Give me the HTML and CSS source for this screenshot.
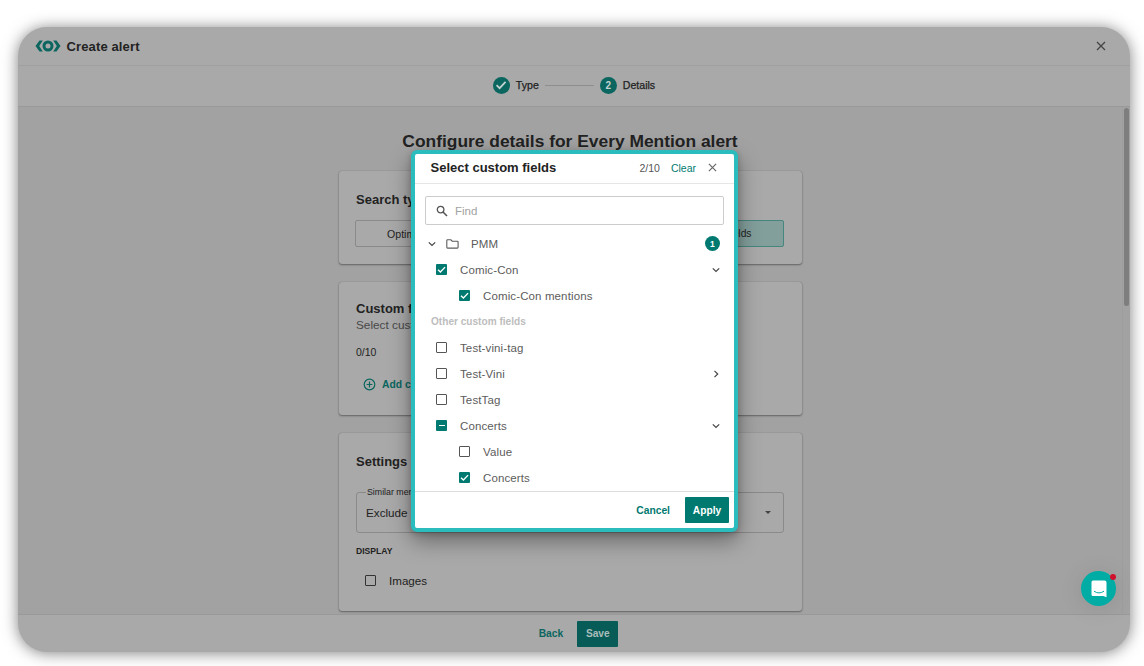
FILE: index.html
```html
<!DOCTYPE html>
<html lang="en">
<head>
  <meta charset="UTF-8" />
  <meta name="viewport" content="width=device-width, initial-scale=1.0"/>
  <title>Create alert</title>
  <link rel="stylesheet" href="styles.css">
</head>
<body>
  <svg class="sprite" width="0" height="0">
    <symbol id="check" viewBox="0 0 12 12"><path d="M2.2 6.2 4.8 8.7 9.9 3.4" fill="none" stroke="currentColor" stroke-width="1.5"/></symbol>
    <symbol id="down" viewBox="0 0 8 8"><path d="M.8 2.3 4 5.500 7.200 2.300" fill="none" stroke="currentColor" stroke-width="1.2"/></symbol>
    <symbol id="right" viewBox="0 0 8 8"><path d="M2.500 .8 5.700 4 2.500 7.200" fill="none" stroke="currentColor" stroke-width="1.2"/></symbol>
    <symbol id="close" viewBox="0 0 10 10"><path d="M1 1 9 9M9 1 1 9" fill="none" stroke="currentColor" stroke-width="1.3"/></symbol>
  </svg>

  <div class="window">
    <header class="header">
      <svg class="logo" viewBox="0 0 25 12">
        <path d="M0 6 4 .5h3.300L3.700 6l3.600 5.500H4zM25 6 21 .5h-3.300L21.300 6l-3.600 5.500H21z" fill="currentColor"/>
        <circle cx="12.5" cy="6" r="4" fill="none" stroke="currentColor" stroke-width="3"/>
      </svg>
      <h1>Create alert</h1>
      <svg class="header-close"><use href="#close"/></svg>
    </header>

    <div class="stepper">
      <span class="step-icon"><svg width="14" height="14"><use href="#check"/></svg></span>
      <span class="step-label">Type</span>
      <span class="step-line"></span>
      <span class="step-icon">2</span>
      <span class="step-label">Details</span>
    </div>

    <main class="content">
      <h2 class="page-title">Configure details for Every Mention alert</h2>

      <section class="card search-card">
        <h3>Search type</h3>
        <div class="segments">
          <button class="segment first">Optimized</button>
          <button class="segment"></button>
          <button class="segment last active">Custom fields</button>
        </div>
      </section>

      <section class="card fields-card">
        <h3>Custom fields</h3>
        <p class="hint">Select custom</p>
        <p class="count">0/10</p>
        <button class="add-btn">
          <svg width="13" height="13" viewBox="0 0 13 13"><g fill="none" stroke="currentColor" stroke-width="1.2"><circle cx="6.5" cy="6.5" r="5.3"/><path d="M6.5 3.6v5.8M3.6 6.5h5.8"/></g></svg>
          Add custom field
        </button>
      </section>

      <section class="card settings-card">
        <h3>Settings</h3>
        <fieldset class="select">
          <legend>Similar mentions</legend>
          <span>Exclude</span>
          <svg width="6" height="3" viewBox="0 0 6 3"><path d="M0 0h6L3 3z" fill="currentColor"/></svg>
        </fieldset>
        <h4>DISPLAY</h4>
        <label class="display-row"><span class="box"></span>Images</label>
      </section>

      <div class="scroll-track"><div class="scroll-thumb"></div></div>
    </main>

    <footer class="footer">
      <button class="link-btn">Back</button>
      <button class="save-btn">Save</button>
    </footer>

    <div class="modal">
      <div class="modal-header">
        <h3>Select custom fields</h3>
        <span class="modal-count">2/10</span>
        <a class="clear">Clear</a>
        <svg class="modal-close"><use href="#close"/></svg>
      </div>
      <div class="modal-body">
        <div class="search">
          <svg width="12" height="12" viewBox="0 0 12 12"><g fill="none" stroke="currentColor" stroke-width="1.3"><circle cx="4.6" cy="4.6" r="3.3"/><path d="M7 7 11 11" stroke-width="1.6"/></g></svg>
          <span>Find</span>
        </div>
        <div class="row folder">
          <svg class="arrow"><use href="#down"/></svg>
          <svg class="folder-icon" viewBox="0 0 13 10"><path d="M1.6.8h3.3l1.3 1.4h5.1q.8 0 .8.8v5.2q0 .9-.8.9H1.6q-.8 0-.8-.9V1.6q0-.8.8-.8z" fill="none" stroke="currentColor" stroke-width="1.1"/></svg>
          <span class="label">PMM</span>
          <span class="badge">1</span>
        </div>
        <div class="row">
          <span class="box checked"><svg><use href="#check"/></svg></span>
          <span class="label">Comic-Con</span>
          <svg class="arrow"><use href="#down"/></svg>
        </div>
        <div class="row child">
          <span class="box checked"><svg><use href="#check"/></svg></span>
          <span class="label">Comic-Con mentions</span>
        </div>
        <div class="row group">Other custom fields</div>
        <div class="row">
          <span class="box"></span>
          <span class="label">Test-vini-tag</span>
        </div>
        <div class="row">
          <span class="box"></span>
          <span class="label">Test-Vini</span>
          <svg class="arrow"><use href="#right"/></svg>
        </div>
        <div class="row">
          <span class="box"></span>
          <span class="label">TestTag</span>
        </div>
        <div class="row">
          <span class="box checked"><span class="dash"></span></span>
          <span class="label">Concerts</span>
          <svg class="arrow"><use href="#down"/></svg>
        </div>
        <div class="row child">
          <span class="box"></span>
          <span class="label">Value</span>
        </div>
        <div class="row child">
          <span class="box checked"><svg><use href="#check"/></svg></span>
          <span class="label">Concerts</span>
        </div>
      </div>
      <div class="modal-footer">
        <button class="link-btn">Cancel</button>
        <button class="apply-btn">Apply</button>
      </div>
    </div>

    <div class="chat">
      <svg width="16" height="18" viewBox="0 0 16 18"><path d="M2 .5h11.500q2 0 2 2V17.300l-3.200-1.300H2q-1.500 0-1.500-1.500V2Q.5.500 2 .500z" fill="#fff"/><path d="M3 11.200q5 3.400 10 0" fill="none" stroke="#00aca4" stroke-width="1"/></svg>
      <span class="chat-dot"></span>
    </div>
  </div>
</body>
</html>
```

FILE: styles.css
```css
* {
  box-sizing: border-box;
}

body {
  margin: 0;
  height: 666px;
  padding: 27px 14px 14px 18px;
  overflow: hidden;
  background: #fff;
  color: #222;
  font-family: "Liberation Sans", Arial, sans-serif;
}

h1, h2, h3, h4, p {
  margin: 0;
}

button {
  padding: 0;
  border: none;
  background: none;
  color: inherit;
  font-family: inherit;
}

.sprite {
  position: absolute;
}

.window {
  position: relative;
  display: flex;
  flex-direction: column;
  width: 1112px;
  height: 625px;
  border-radius: 29px;
  background: #a9a9a9;
  box-shadow: 0 1px 15px rgba(0, 0, 0, 0.5);
}

.header {
  display: flex;
  align-items: center;
  height: 39px;
  padding: 0 24px 0 17px;
  border-bottom: 1px solid #a0a0a0;
}

.logo {
  width: 26px;
  height: 12px;
  margin-right: 5.5px;
  color: #0b6660;
}

h1 {
  font-size: 13px;
  letter-spacing: 0.13px;
}

.header-close {
  width: 10px;
  height: 10px;
  margin-left: auto;
  color: #444;
}

.stepper {
  display: flex;
  align-items: center;
  justify-content: center;
  height: 41px;
  padding-bottom: 2px;
  border-bottom: 1px solid #999;
}

.step-icon {
  display: flex;
  align-items: center;
  justify-content: center;
  width: 17px;
  height: 17px;
  border-radius: 50%;
  background: #0b6660;
  color: #c4d2d0;
  font-size: 10px;
  font-weight: 700;
}

.step-label {
  margin-left: 6px;
  font-size: 10.6px;
  -webkit-text-stroke: 0.25px #222;
}

.step-line {
  width: 49px;
  height: 1px;
  margin: 0 6px;
  background: #8e8e8e;
}

.content {
  position: relative;
  display: flex;
  flex-direction: column;
  align-items: center;
  height: 507px;
  padding-right: 8px;
  background: #a2a2a2;
}

.page-title {
  height: 64px;
  padding-top: 24px;
  font-size: 17.4px;
  line-height: 20px;
  white-space: nowrap;
}

.card {
  flex: none;
  width: 463px;
  margin-bottom: 18px;
  padding: 0 18px 0 17.5px;
  border-radius: 3px;
  background: #a9a9a9;
  box-shadow: 0 1px 2px rgba(0, 0, 0, 0.38), 0 0 1px rgba(0, 0, 0, 0.3);
}

.card h3,
.modal h3 {
  font-size: 13px;
  line-height: 16px;
}

.search-card {
  height: 93px;
  padding-top: 21px;
}

.segments {
  display: flex;
  height: 27px;
  margin: 12px 0 0 -1px;
}

.segment {
  display: flex;
  align-items: center;
  flex: 1;
  border: 1px solid #8a8a8a;
  font-size: 10.6px;
}

.segment.first {
  padding-left: 31px;
  border-radius: 2px 0 0 2px;
}

.segment.last {
  justify-content: flex-end;
  padding-right: 31px;
  border-radius: 0 2px 2px 0;
  font-size: 10.3px;
}

.segment.active {
  border-color: #47857f;
  background: #839f9b;
}

.fields-card {
  height: 133px;
  padding-top: 19px;
}

.hint {
  color: #484848;
  font-size: 11.8px;
  line-height: 17px;
}

.count {
  margin-top: 12px;
  font-size: 10.5px;
  line-height: 13px;
}

.add-btn {
  display: flex;
  align-items: center;
  gap: 6px;
  margin: 18.5px 0 0 7px;
  color: #0b6660;
  font-size: 10.3px;
  font-weight: 700;
}

.settings-card {
  height: 178px;
  margin-bottom: 0;
  padding-top: 21px;
}

.select {
  display: flex;
  align-items: center;
  justify-content: space-between;
  height: 46px;
  margin: 17px 0 0;
  padding: 0 12px 6px 9px;
  border: 1px solid #8a8a8a;
  border-radius: 3px;
  font-size: 11.7px;
}

.select legend {
  padding: 0 3px 0 1px;
  font-size: 8.8px;
  line-height: 11px;
}

.select svg {
  margin-top: 1px;
  color: #444;
}

h4 {
  margin-top: 12px;
  font-size: 8.6px;
  line-height: 12px;
}

.display-row {
  display: flex;
  align-items: center;
  gap: 13px;
  margin: 17px 0 0 9px;
  font-size: 11.6px;
}

.box {
  display: flex;
  align-items: center;
  justify-content: center;
  flex: none;
  width: 11px;
  height: 11px;
  border: 1.5px solid #555;
  border-radius: 1px;
}

.display-row .box {
  border: 1px solid #333;
}

.scroll-track {
  position: absolute;
  top: 0;
  right: 0;
  width: 8px;
  height: 100%;
  border-left: 1px solid #9e9e9e;
}

.scroll-thumb {
  width: 5px;
  height: 198px;
  margin: 1px 0 0 1px;
  border-radius: 3px;
  background: #7e7e7e;
}

.footer {
  display: flex;
  align-items: center;
  justify-content: center;
  gap: 14px;
  height: 38px;
  padding-left: 9px;
  border-top: 1px solid #999;
}

.link-btn {
  color: #0b6660;
  font-size: 10.3px;
  font-weight: 700;
}

.save-btn,
.apply-btn {
  height: 26px;
  border-radius: 1px;
  font-size: 10.2px;
  font-weight: 700;
}

.save-btn {
  width: 41px;
  background: #075c57;
  color: #a9bdbb;
}

/* custom fields dialog */
.modal {
  position: absolute;
  top: 123px;
  left: 393px;
  display: flex;
  flex-direction: column;
  width: 327px;
  height: 382px;
  border: 4px solid #2bbcbd;
  border-radius: 6px;
  background: #fff;
  box-shadow: 0 9px 22px rgba(0, 0, 0, 0.38), 0 2px 6px rgba(0, 0, 0, 0.2);
}

.modal-header {
  display: flex;
  align-items: center;
  height: 30px;
  padding: 0 17px 2px 15.5px;
  border-bottom: 1px solid #e6e6e6;
  color: #222;
}

.modal-count {
  margin-left: auto;
  color: #555;
  font-size: 10.5px;
}

.clear {
  margin: 0 12px 0 11px;
  color: #007a70;
  font-size: 10.5px;
}

.modal-close {
  width: 9px;
  height: 9px;
  color: #666;
}

.modal-body {
  flex: 1;
  padding: 12px 10px 0;
}

.search {
  display: flex;
  align-items: center;
  gap: 7px;
  height: 29px;
  margin-bottom: 5.5px;
  padding-left: 10px;
  border: 1px solid #ccc;
  border-radius: 2px;
  color: #555;
  font-size: 11.5px;
}

.search span {
  color: #a2a2a2;
}

.row {
  display: flex;
  align-items: center;
  height: 26.05px;
  padding: 0 4px 0 11px;
  color: #5c5c5c;
  font-size: 11.5px;
  letter-spacing: 0.12px;
}

.row.child {
  padding-left: 34px;
}

.row.folder {
  padding-left: 3px;
}

.row .label {
  margin-left: 13px;
}

.row.folder .label {
  margin-left: 12px;
}

.row.group {
  padding-left: 6px;
  color: #bdbdbd;
  font-size: 10.1px;
  font-weight: 700;
  letter-spacing: 0;
}

.arrow {
  width: 8px;
  height: 8px;
  margin-left: auto;
  color: #444;
}

.folder .arrow {
  margin: 0 10px 0 0;
}

.folder-icon {
  width: 13px;
  height: 10px;
}

.box.checked {
  border: none;
  background: #007a70;
  color: #fff;
}

.box svg {
  width: 11px;
  height: 11px;
}

.dash {
  width: 6px;
  height: 1px;
  background: #fff;
}

.badge {
  display: flex;
  align-items: center;
  justify-content: center;
  width: 15px;
  height: 15px;
  margin-left: auto;
  border-radius: 50%;
  background: #007a70;
  color: #fff;
  font-size: 8.5px;
  font-weight: 700;
}

.modal-footer {
  display: flex;
  align-items: center;
  justify-content: flex-end;
  gap: 15px;
  height: 37px;
  padding-right: 5px;
  border-top: 1px solid #ddd;
}

.modal-footer .link-btn {
  color: #007a70;
}

.apply-btn {
  width: 44px;
  background: #007a70;
  color: #fff;
}

.chat {
  position: absolute;
  right: 14px;
  bottom: 46px;
  display: flex;
  align-items: center;
  justify-content: center;
  width: 35px;
  height: 35px;
  border-radius: 50%;
  background: #00aca4;
  box-shadow: 0 2px 25px rgba(0, 0, 0, 0.1);
}

.chat-dot {
  position: absolute;
  top: 3px;
  right: 0;
  width: 6px;
  height: 6px;
  border-radius: 50%;
  background: #d0102c;
}
```
